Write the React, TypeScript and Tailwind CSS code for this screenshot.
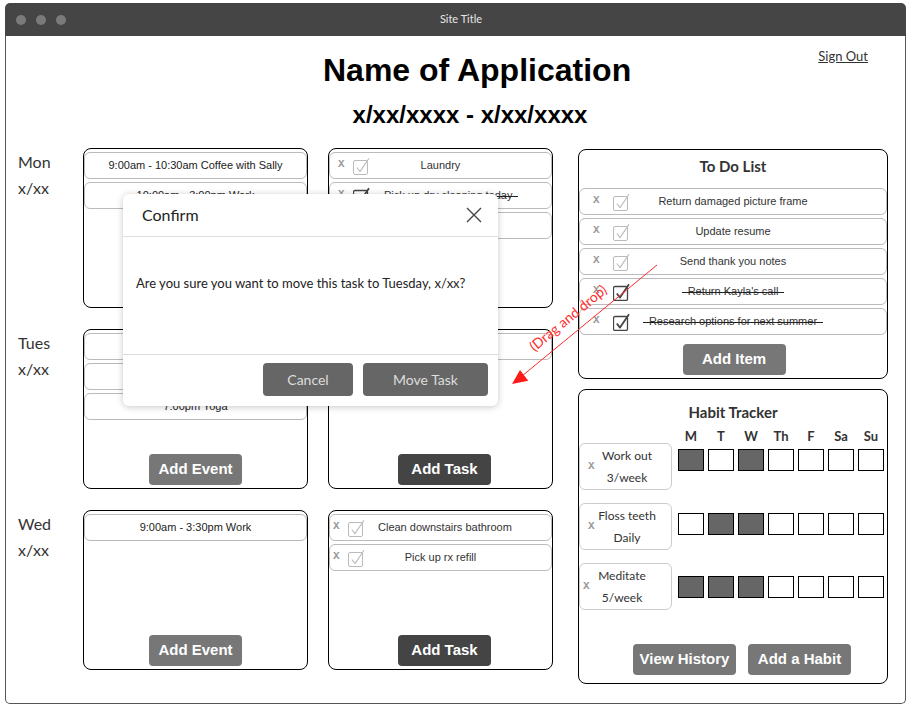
import React from "react";

const arial = "font-['Liberation_Sans',Arial,sans-serif]";
const humanist = "font-['Lato','Open_Sans',sans-serif]";

type Task = { text: string; done?: boolean };

function Check({ done }: { done?: boolean }) {
  const c = done ? "#444" : "#bbb";
  return (
    <svg width="17" height="18" viewBox="0 0 17 18" className="block shrink-0">
      <rect x="0.5" y="3.5" width="14" height="14" rx="1.5" fill="white" stroke={c} strokeWidth={done ? 1.3 : 1} />
      <path d="M3.8 10.5 L7 14.6 L16 1.2" fill="none" stroke={c} strokeWidth={done ? 1.8 : 1.1} strokeLinejoin="round" />
    </svg>
  );
}

function Struck({ text, done }: Task) {
  if (!done) return <span>{text}</span>;
  return (
    <span className="relative px-[6px] before:content-[''] before:absolute before:inset-x-0 before:top-[55%] before:h-[1px] before:bg-[#222]">
      {text}
    </span>
  );
}

function TaskRow({ task, xPad, side }: { task: Task; xPad: string; side: string }) {
  return (
    <div className={`grid ${side} h-[27px] items-center rounded-[6px] border border-[#bbb] bg-white`}>
      <div className={`flex items-center ${xPad}`}>
        <span className="w-[7px] font-['Liberation_Mono',monospace] text-[11px] font-bold leading-none text-[#999] -mt-[2px]">X</span>
        <span className="ml-[8px]">
          <Check done={task.done} />
        </span>
      </div>
      <div className={`${arial} text-center text-[11px] text-[#333] whitespace-nowrap`}>
        <Struck {...task} />
      </div>
      <div />
    </div>
  );
}

function GrayButton({ label, dark, width }: { label: string; dark?: boolean; width: string }) {
  return (
    <button
      type="button"
      className={`${width} h-[31px] rounded-[4px] ${dark ? "bg-[#444]" : "bg-[#777]"} ${arial} text-[15px] font-bold text-white`}
    >
      {label}
    </button>
  );
}

function EventCard({ events }: { events: string[] }) {
  return (
    <div className="flex h-[160px] w-[225px] flex-col rounded-[8px] border-[1.5px] border-black pt-[3px]">
      <div className="flex flex-col gap-[3px]">
        {events.map((e) => (
          <div
            key={e}
            className={`flex h-[27px] items-center justify-center rounded-[6px] border border-[#bbb] ${arial} text-[11px] text-[#222]`}
          >
            {e}
          </div>
        ))}
      </div>
      <div className="mt-auto mb-[3.5px] self-center">
        <GrayButton label="Add Event" width="w-[93px]" />
      </div>
    </div>
  );
}

function TaskCard({ tasks, xPad }: { tasks: Task[]; xPad: string }) {
  return (
    <div className="flex h-[160px] w-[225px] flex-col rounded-[8px] border-[1.5px] border-black pt-[3px]">
      <div className="flex flex-col gap-[3px]">
        {tasks.map((t) => (
          <TaskRow key={t.text} task={t} xPad={xPad} side="grid-cols-[48px_1fr_48px]" />
        ))}
      </div>
      <div className="mt-auto mb-[3.5px] ml-[8px] self-center">
        <GrayButton label="Add Task" dark width="w-[93px]" />
      </div>
    </div>
  );
}

const days = [
  {
    name: "Mon",
    events: ["9:00am - 10:30am Coffee with Sally", "10:00am - 3:00pm Work"],
    tasks: [
      { text: "Laundry" },
      { text: "Pick up dry cleaning today", done: true },
      { text: "Call mom" },
    ],
    xPad: "pl-[8px]",
  },
  {
    name: "Tues",
    events: ["9:00am - 3:30pm Work", "5:00pm Dentist", "7:00pm Yoga"],
    tasks: [{ text: "Grocery shopping" }],
    xPad: "pl-[8px]",
  },
  {
    name: "Wed",
    events: ["9:00am - 3:30pm Work"],
    tasks: [{ text: "Clean downstairs bathroom" }, { text: "Pick up rx refill" }],
    xPad: "pl-[3px]",
  },
];

const todos: Task[] = [
  { text: "Return damaged picture frame" },
  { text: "Update resume" },
  { text: "Send thank you notes" },
  { text: "Return Kayla's call", done: true },
  { text: "Research options for next summer", done: true },
];

const habits = [
  { name: "Work out", goal: "3/week", marks: [1, 0, 1, 0, 0, 0, 0], pad: "pl-[8px]", mt: "mt-[-1px]", boxMt: "mt-[6px]" },
  { name: "Floss teeth", goal: "Daily", marks: [0, 1, 1, 0, 0, 0, 0], pad: "pl-[8px]", mt: "mt-[13px]", boxMt: "mt-[10px]" },
  { name: "Meditate", goal: "5/week", marks: [1, 1, 1, 0, 0, 0, 0], pad: "pl-[3px]", mt: "mt-[13px]", boxMt: "mt-[13px]" },
];

const weekdays = ["M", "T", "W", "Th", "F", "Sa", "Su"];

export default function App() {
  return (
    <div className="h-[710px] w-[910px] bg-white pl-[5px] pt-[3px]">
      <div className="flex h-[701px] w-[901px] flex-col">
        {/* window chrome */}
        <div className="flex h-[33px] shrink-0 items-center rounded-t-[5px] bg-[#454545]">
          <div className="flex w-[80px] gap-[10px] pl-[11px]">
            <span className="h-[10px] w-[10px] rounded-full bg-[#7a7a7a]" />
            <span className="h-[10px] w-[10px] rounded-full bg-[#7a7a7a]" />
            <span className="h-[10px] w-[10px] rounded-full bg-[#7a7a7a]" />
          </div>
          <div className={`mr-[69px] flex-1 text-center ${humanist} text-[11px] text-[#e6e6e6]`}>Site Title</div>
        </div>

        <div className="relative flex-1 rounded-b-[5px] border-x border-b border-[#555]">
          <div className="flex items-start">
            <h1 className={`ml-[317px] mt-[18px] ${arial} text-[32px] font-bold leading-[32px] text-black`}>
              Name of Application
            </h1>
            <a className={`ml-auto mr-[37px] mt-[11.5px] ${humanist} text-[13px] leading-[17px] text-[#333] underline`}>
              Sign Out
            </a>
          </div>
          <h2 className={`mt-[17px] pl-[29px] text-center ${arial} text-[24px] font-bold leading-[24px] text-black`}>
            x/xx/xxxx - x/xx/xxxx
          </h2>

          <div className="mt-[21px] flex pl-[12px]">
            <div className="flex flex-col gap-[20px]">
              {days.map((d) => (
                <div key={d.name} className="flex h-[161px]">
                  <div className={`w-[65px] pt-[1px] ${humanist} text-[16px] leading-[26px] text-[#333]`}>
                    <div>{d.name}</div>
                    <div>x/xx</div>
                  </div>
                  <EventCard events={d.events} />
                  <div className="ml-[20px]">
                    <TaskCard tasks={d.tasks} xPad={d.xPad} />
                  </div>
                </div>
              ))}
            </div>

            <div className="ml-[25px] mt-[1px] flex w-[310px] flex-col">
              <div className="flex h-[230px] flex-col rounded-[8px] border-[1.5px] border-black pt-[6px]">
                <div className={`text-center ${humanist} text-[15px] font-bold leading-[20px] text-[#333]`}>To Do List</div>
                <div className="mt-[12px] flex flex-col gap-[3px]">
                  {todos.map((t) => (
                    <TaskRow key={t.text} task={t} xPad="pl-[13px] [&>span+span]:ml-[13px]" side="grid-cols-[56px_1fr_56px]" />
                  ))}
                </div>
                <div className="mt-[9px] ml-[2px] self-center">
                  <GrayButton label="Add Item" width="w-[103px]" />
                </div>
              </div>

              <div className="mt-[10px] flex h-[295px] flex-col rounded-[8px] border-[1.5px] border-black pt-[12px]">
                <div className={`text-center ${humanist} text-[15px] font-bold leading-[20px] text-[#333]`}>Habit Tracker</div>
                <div className="mt-[6px] flex gap-[4px] pl-[99px]">
                  {weekdays.map((w) => (
                    <div key={w} className={`w-[26px] text-center ${humanist} text-[13px] font-bold leading-[16px] text-[#333]`}>
                      {w}
                    </div>
                  ))}
                </div>
                {habits.map((h) => (
                  <div key={h.name} className={`flex items-start ${h.mt}`}>
                    <div className={`flex h-[47px] w-[93px] items-center rounded-[6px] border border-[#ccc] ${h.pad}`}>
                      <span className="w-[7px] font-['Liberation_Mono',monospace] text-[11px] font-bold leading-none text-[#999]">X</span>
                      <div className={`ml-[1px] w-[62px] text-center ${humanist} text-[12px] leading-[22px] text-[#333]`}>
                        <div>{h.name}</div>
                        <div>{h.goal}</div>
                      </div>
                    </div>
                    <div className={`ml-[6px] flex gap-[4px] ${h.boxMt}`}>
                      {h.marks.map((m, i) => (
                        <div
                          key={i}
                          className={`h-[22px] w-[26px] border-[1.5px] border-black ${m ? "bg-[#666]" : "bg-white"}`}
                        />
                      ))}
                    </div>
                  </div>
                ))}
                <div className="mt-auto mb-[8px] flex justify-center gap-[12px] pl-[18px]">
                  <GrayButton label="View History" width="w-[103px]" />
                  <GrayButton label="Add a Habit" width="w-[103px]" />
                </div>
              </div>
            </div>
          </div>

          {/* drag and drop annotation */}
          <svg className="pointer-events-none absolute left-0 top-0 z-20" width="899" height="668">
            <line x1="651" y1="229" x2="516" y2="340" stroke="#ff2a2a" strokeWidth="1" />
            <polygon points="506,348 514,334 522.3,344.7" fill="#ff1a1a" />
            <text
              x="562"
              y="287"
              textAnchor="middle"
              fill="#ff3030"
              fontSize="14"
              fontFamily="Lato, 'Open Sans', sans-serif"
              transform="rotate(-39.4 562 282)"
            >
              (Drag and drop)
            </text>
          </svg>

          {/* confirm dialog */}
          <div className="absolute left-[117px] top-[158px] z-10 flex h-[212px] w-[375px] flex-col rounded-[6px] bg-white shadow-[0_1px_7px_rgba(0,0,0,0.22)]">
            <div className="flex h-[43px] items-center justify-between border-b border-[#ddd] pl-[19px] pr-[16px]">
              <span className={`${humanist} text-[16px] text-[#222]`}>Confirm</span>
              <svg width="16" height="16" viewBox="0 0 16 16">
                <path d="M1 1 L15 15 M15 1 L1 15" stroke="#444" strokeWidth="1.4" />
              </svg>
            </div>
            <div className={`h-[118px] border-b border-[#ddd] pl-[13px] pt-[37px] ${humanist} text-[13px] text-[#222]`}>
              Are you sure you want to move this task to Tuesday, x/xx?
            </div>
            <div className={`flex justify-end gap-[10px] pr-[10px] pt-[8px] ${humanist} text-[14px]`}>
              <button type="button" className="h-[33px] w-[90px] rounded-[4px] bg-[#666] text-[#ddd]">
                Cancel
              </button>
              <button type="button" className="h-[33px] w-[125px] rounded-[4px] bg-[#666] text-[#ddd]">
                Move Task
              </button>
            </div>
          </div>
        </div>
      </div>
    </div>
  );
}
